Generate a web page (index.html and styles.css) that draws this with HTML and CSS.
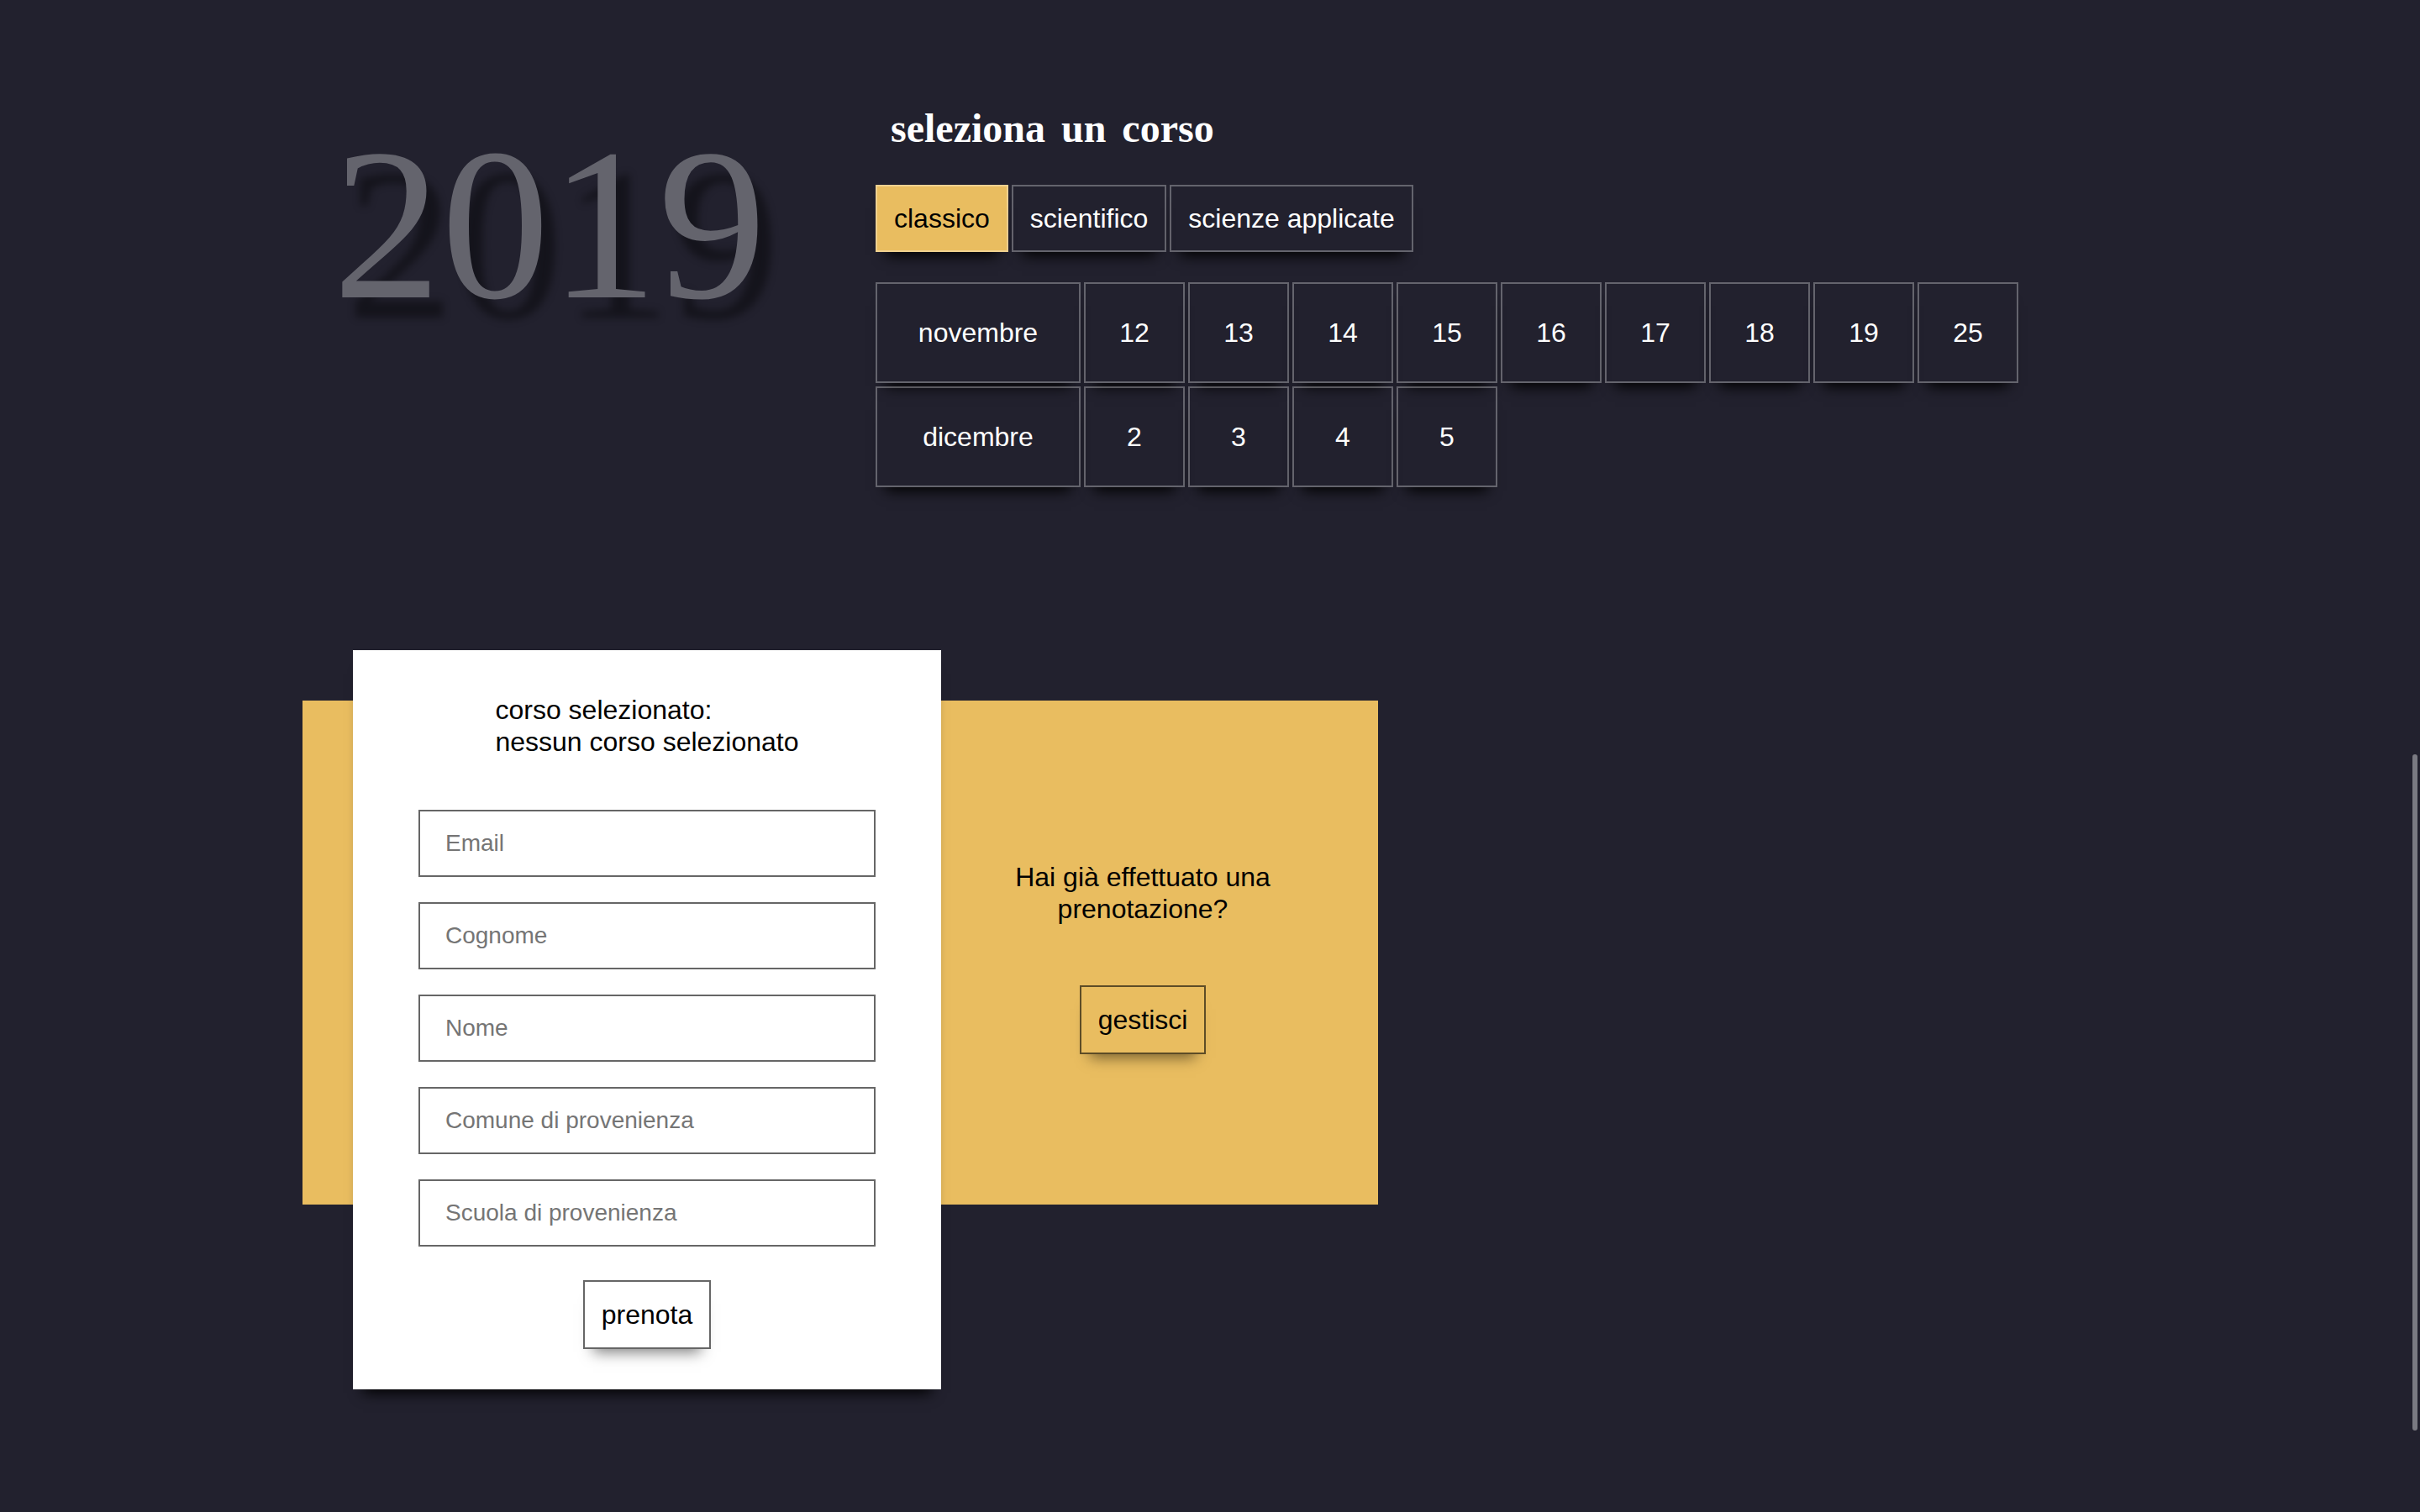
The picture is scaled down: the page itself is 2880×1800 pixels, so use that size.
FILE: index.html
```html
<!DOCTYPE html>
<html lang="it">
<head>
<meta charset="utf-8">
<meta name="viewport" content="width=device-width, initial-scale=1">
<title>Prenotazione corsi 2019</title>
<link rel="stylesheet" href="styles.css">
</head>
<body>
<main class="page">
  <section class="courses">
    <div class="year">2019</div>
    <div class="picker">
      <h1 class="title"><span>seleziona</span> <span>un</span> <span>corso</span></h1>
      <div class="row tabs">
        <button type="button" class="box active">classico</button>
        <button type="button" class="box">scientifico</button>
        <button type="button" class="box">scienze applicate</button>
      </div>
      <div class="calendar">
        <div class="row">
          <div class="box month">novembre</div>
          <button type="button" class="box day">12</button>
          <button type="button" class="box day">13</button>
          <button type="button" class="box day">14</button>
          <button type="button" class="box day">15</button>
          <button type="button" class="box day">16</button>
          <button type="button" class="box day">17</button>
          <button type="button" class="box day">18</button>
          <button type="button" class="box day">19</button>
          <button type="button" class="box day">25</button>
        </div>
        <div class="row">
          <div class="box month">dicembre</div>
          <button type="button" class="box day">2</button>
          <button type="button" class="box day">3</button>
          <button type="button" class="box day">4</button>
          <button type="button" class="box day">5</button>
        </div>
      </div>
    </div>
  </section>

  <section class="booking">
    <form class="card">
      <p class="selected">corso selezionato:<br>nessun corso selezionato</p>
      <div class="fields">
        <input class="field" type="email" placeholder="Email" aria-label="Email">
        <input class="field" type="text" placeholder="Cognome" aria-label="Cognome">
        <input class="field" type="text" placeholder="Nome" aria-label="Nome">
        <input class="field" type="text" placeholder="Comune di provenienza" aria-label="Comune di provenienza">
        <input class="field" type="text" placeholder="Scuola di provenienza" aria-label="Scuola di provenienza">
      </div>
      <button type="submit" class="action">prenota</button>
    </form>
    <div class="manage">
      <p class="question">Hai già effettuato una prenotazione?</p>
      <button type="button" class="action">gestisci</button>
    </div>
  </section>
</main>
<div class="scroll-thumb" aria-hidden="true"></div>
</body>
</html>
```
FILE: styles.css
```css
* {
  box-sizing: border-box;
}

body {
  margin: 0;
  background: #22212e;
  color: #fff;
  font-family: "Liberation Sans", Arial, sans-serif;
  font-size: 32px;
  line-height: 38px;
}

button,
input {
  font: inherit;
  color: inherit;
  margin: 0;
  border-radius: 0;
}

button {
  cursor: pointer;
}

.page {
  min-height: 100vh;
  padding: 120px 12.5%;
}

/* year and course picker */

.courses {
  display: flex;
  align-items: flex-start;
}

.year {
  flex: 0 0 682px;
  padding-left: 36px;
  font-family: "Liberation Serif", "Times New Roman", serif;
  font-size: 258px;
  line-height: 294px;
  color: #64646d;
  text-shadow: 16px 24px 10px rgba(0, 0, 0, 0.4);
}

.title {
  display: flex;
  gap: 19px;
  margin: 0 0 36px;
  padding: 6px 18px 4px;
  font-family: "Liberation Serif", "Times New Roman", serif;
  font-size: 48px;
  line-height: 54px;
  font-weight: bold;
}

.row {
  display: flex;
  gap: 4px;
}

.calendar {
  display: flex;
  flex-direction: column;
  gap: 4px;
  margin-top: 36px;
}

.box {
  display: flex;
  align-items: center;
  justify-content: center;
  height: 80px;
  padding: 0 20px;
  background: transparent;
  border: 2px solid rgba(255, 255, 255, 0.3);
  box-shadow: 0 16px 16px -12px #000;
}

.active {
  background: #e9bd60;
  color: #000;
}

.month {
  width: 244px;
  height: 120px;
}

.day {
  width: 120px;
  height: 120px;
}

/* booking form over the yellow band */

.booking {
  display: flex;
  align-items: center;
  width: 1280px;
  max-width: 100%;
  height: 600px;
  margin-top: 254px;
  padding: 0 40px 0 60px;
  background: #e9bd60;
  color: #000;
}

.card {
  display: flex;
  flex-direction: column;
  align-items: center;
  align-self: flex-start;
  flex: 0 0 700px;
  margin-top: -60px;
  padding: 52px 78px 48px;
  background: #fff;
  box-shadow: 0 16px 16px -12px #000;
}

.selected {
  margin: 0 0 62px;
}

.fields {
  display: flex;
  flex-direction: column;
  gap: 30px;
  width: 100%;
  margin-bottom: 40px;
}

.field {
  width: 100%;
  height: 80px;
  padding: 0 30px;
  background: #fff;
  border: 2px solid #666;
  font-size: 28px;
}

.field::placeholder {
  color: #757575;
  opacity: 1;
}

.action {
  height: 82px;
  padding: 0 20px;
  background: transparent;
  border: 2px solid rgba(0, 0, 0, 0.6);
  box-shadow: 0 16px 16px -12px rgba(0, 0, 0, 0.5);
}

.manage {
  display: flex;
  flex-direction: column;
  align-items: center;
  flex: 1;
  padding: 12px 50px 0;
  text-align: center;
}

.question {
  margin: 0 0 72px;
}

/* page scroll position indicator */

.scroll-thumb {
  position: fixed;
  top: 898px;
  right: 3px;
  width: 6px;
  height: 805px;
  border-radius: 3px;
  background: #7a7a82;
}
```
